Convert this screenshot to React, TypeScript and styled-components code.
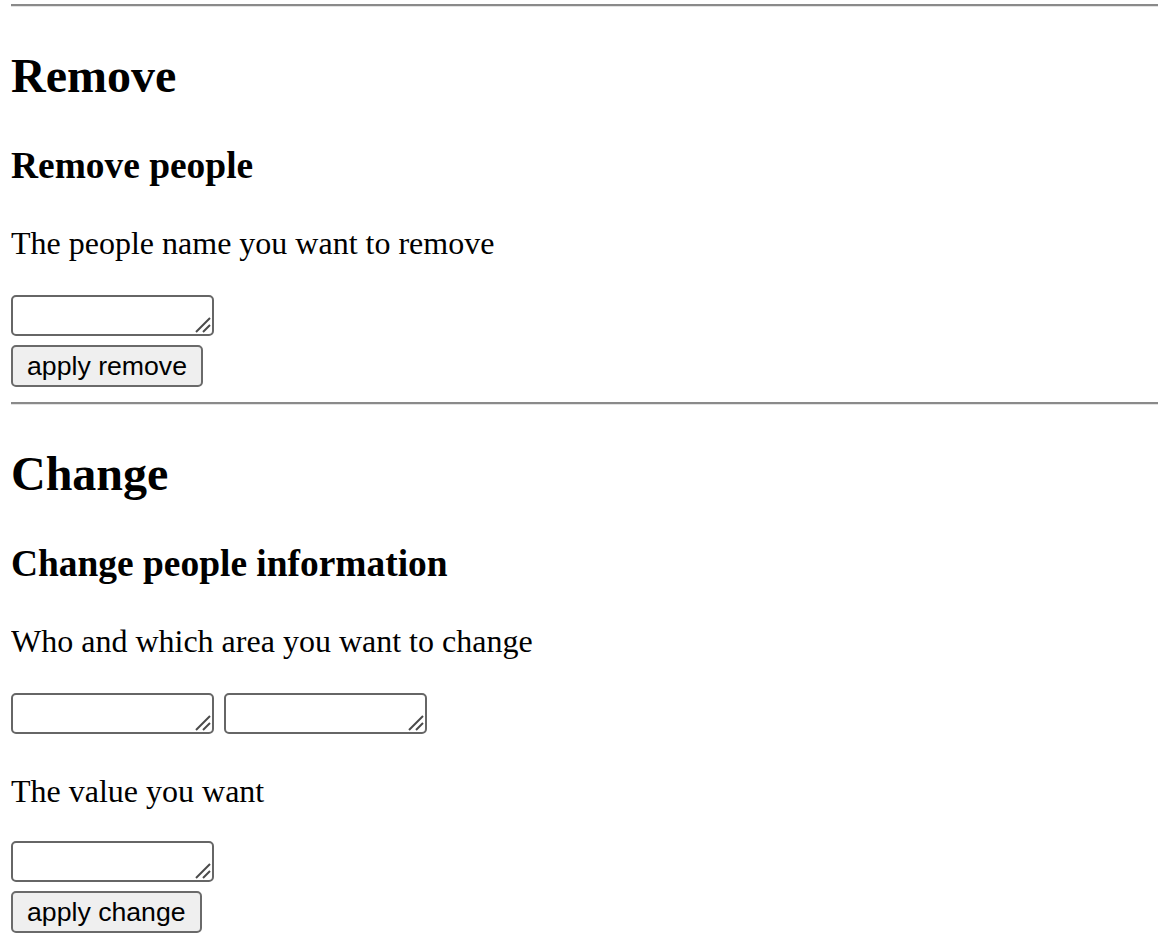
import React from "react";
import styled, { createGlobalStyle } from "styled-components";

const Global = createGlobalStyle`
  html, body { background: #fff; }
  body {
    margin: 0 0 0 11px;
    font-family: "Liberation Serif", "Times New Roman", serif;
    color: #000;
    overflow: hidden;
  }
`;

const Page = styled.div`
  display: flex;
  flex-direction: column;
  align-items: flex-start;
`;

const Rule = styled.hr<{ $top: number }>`
  align-self: stretch;
  height: 0;
  margin: ${(p) => p.$top}px 0 0 0;
  border: none;
  border-top: 2px solid #8a8a8a;
  border-bottom: 1px solid #e3e3e3;
`;

const Title = styled.h2`
  margin: 41px 0 0 0;
  font-size: 48px;
  line-height: 55px;
  font-weight: bold;
`;

const Subtitle = styled.h3`
  margin: 41px 0 0 0;
  font-size: 37.44px;
  line-height: 43px;
  font-weight: bold;
`;

const Text = styled.p<{ $top: number }>`
  margin: ${(p) => p.$top}px 0 0 0;
  font-size: 32px;
  line-height: 37px;
`;

const FieldRow = styled.div<{ $top: number }>`
  display: flex;
  gap: 10px;
  margin-top: ${(p) => p.$top}px;
`;

const Field = styled.span`
  position: relative;
  display: inline-block;
  width: 203px;
  height: 41px;
`;

const Area = styled.textarea`
  box-sizing: border-box;
  display: block;
  width: 100%;
  height: 100%;
  margin: 0;
  padding: 2px 4px;
  border: 2px solid #666;
  border-radius: 5px;
  background: #fff;
  resize: none;
  font-family: "Liberation Mono", monospace;
  font-size: 26px;
  outline: none;
`;

const Grip = styled.svg`
  position: absolute;
  right: 3px;
  bottom: 3px;
  width: 16px;
  height: 16px;
  pointer-events: none;
`;

const Button = styled.button`
  box-sizing: border-box;
  margin-top: 9px;
  height: 42px;
  padding: 0 14px;
  border: 2px solid #6a6a6a;
  border-radius: 5px;
  background: #efefef;
  color: #000;
  font-family: "Liberation Sans", Arial, sans-serif;
  font-size: 26.67px;
  line-height: 36px;
`;

function TextBox() {
  return (
    <Field>
      <Area />
      <Grip viewBox="0 0 16 16">
        <line x1="1" y1="15" x2="15" y2="1" stroke="#4a4a4a" strokeWidth="2" />
        <line x1="8" y1="15" x2="15" y2="8" stroke="#4a4a4a" strokeWidth="2" />
      </Grip>
    </Field>
  );
}

export default function App() {
  return (
    <>
      <Global />
      <Page>
        <Rule $top={4} />
        <Title>Remove</Title>
        <Subtitle>Remove people</Subtitle>
        <Text $top={38}>The people name you want to remove</Text>
        <FieldRow $top={33}>
          <TextBox />
        </FieldRow>
        <Button>apply remove</Button>
        <Rule $top={15} />
        <Title>Change</Title>
        <Subtitle>Change people information</Subtitle>
        <Text $top={38}>Who and which area you want to change</Text>
        <FieldRow $top={33}>
          <TextBox />
          <TextBox />
        </FieldRow>
        <Text $top={39}>The value you want</Text>
        <FieldRow $top={31}>
          <TextBox />
        </FieldRow>
        <Button>apply change</Button>
      </Page>
    </>
  );
}
